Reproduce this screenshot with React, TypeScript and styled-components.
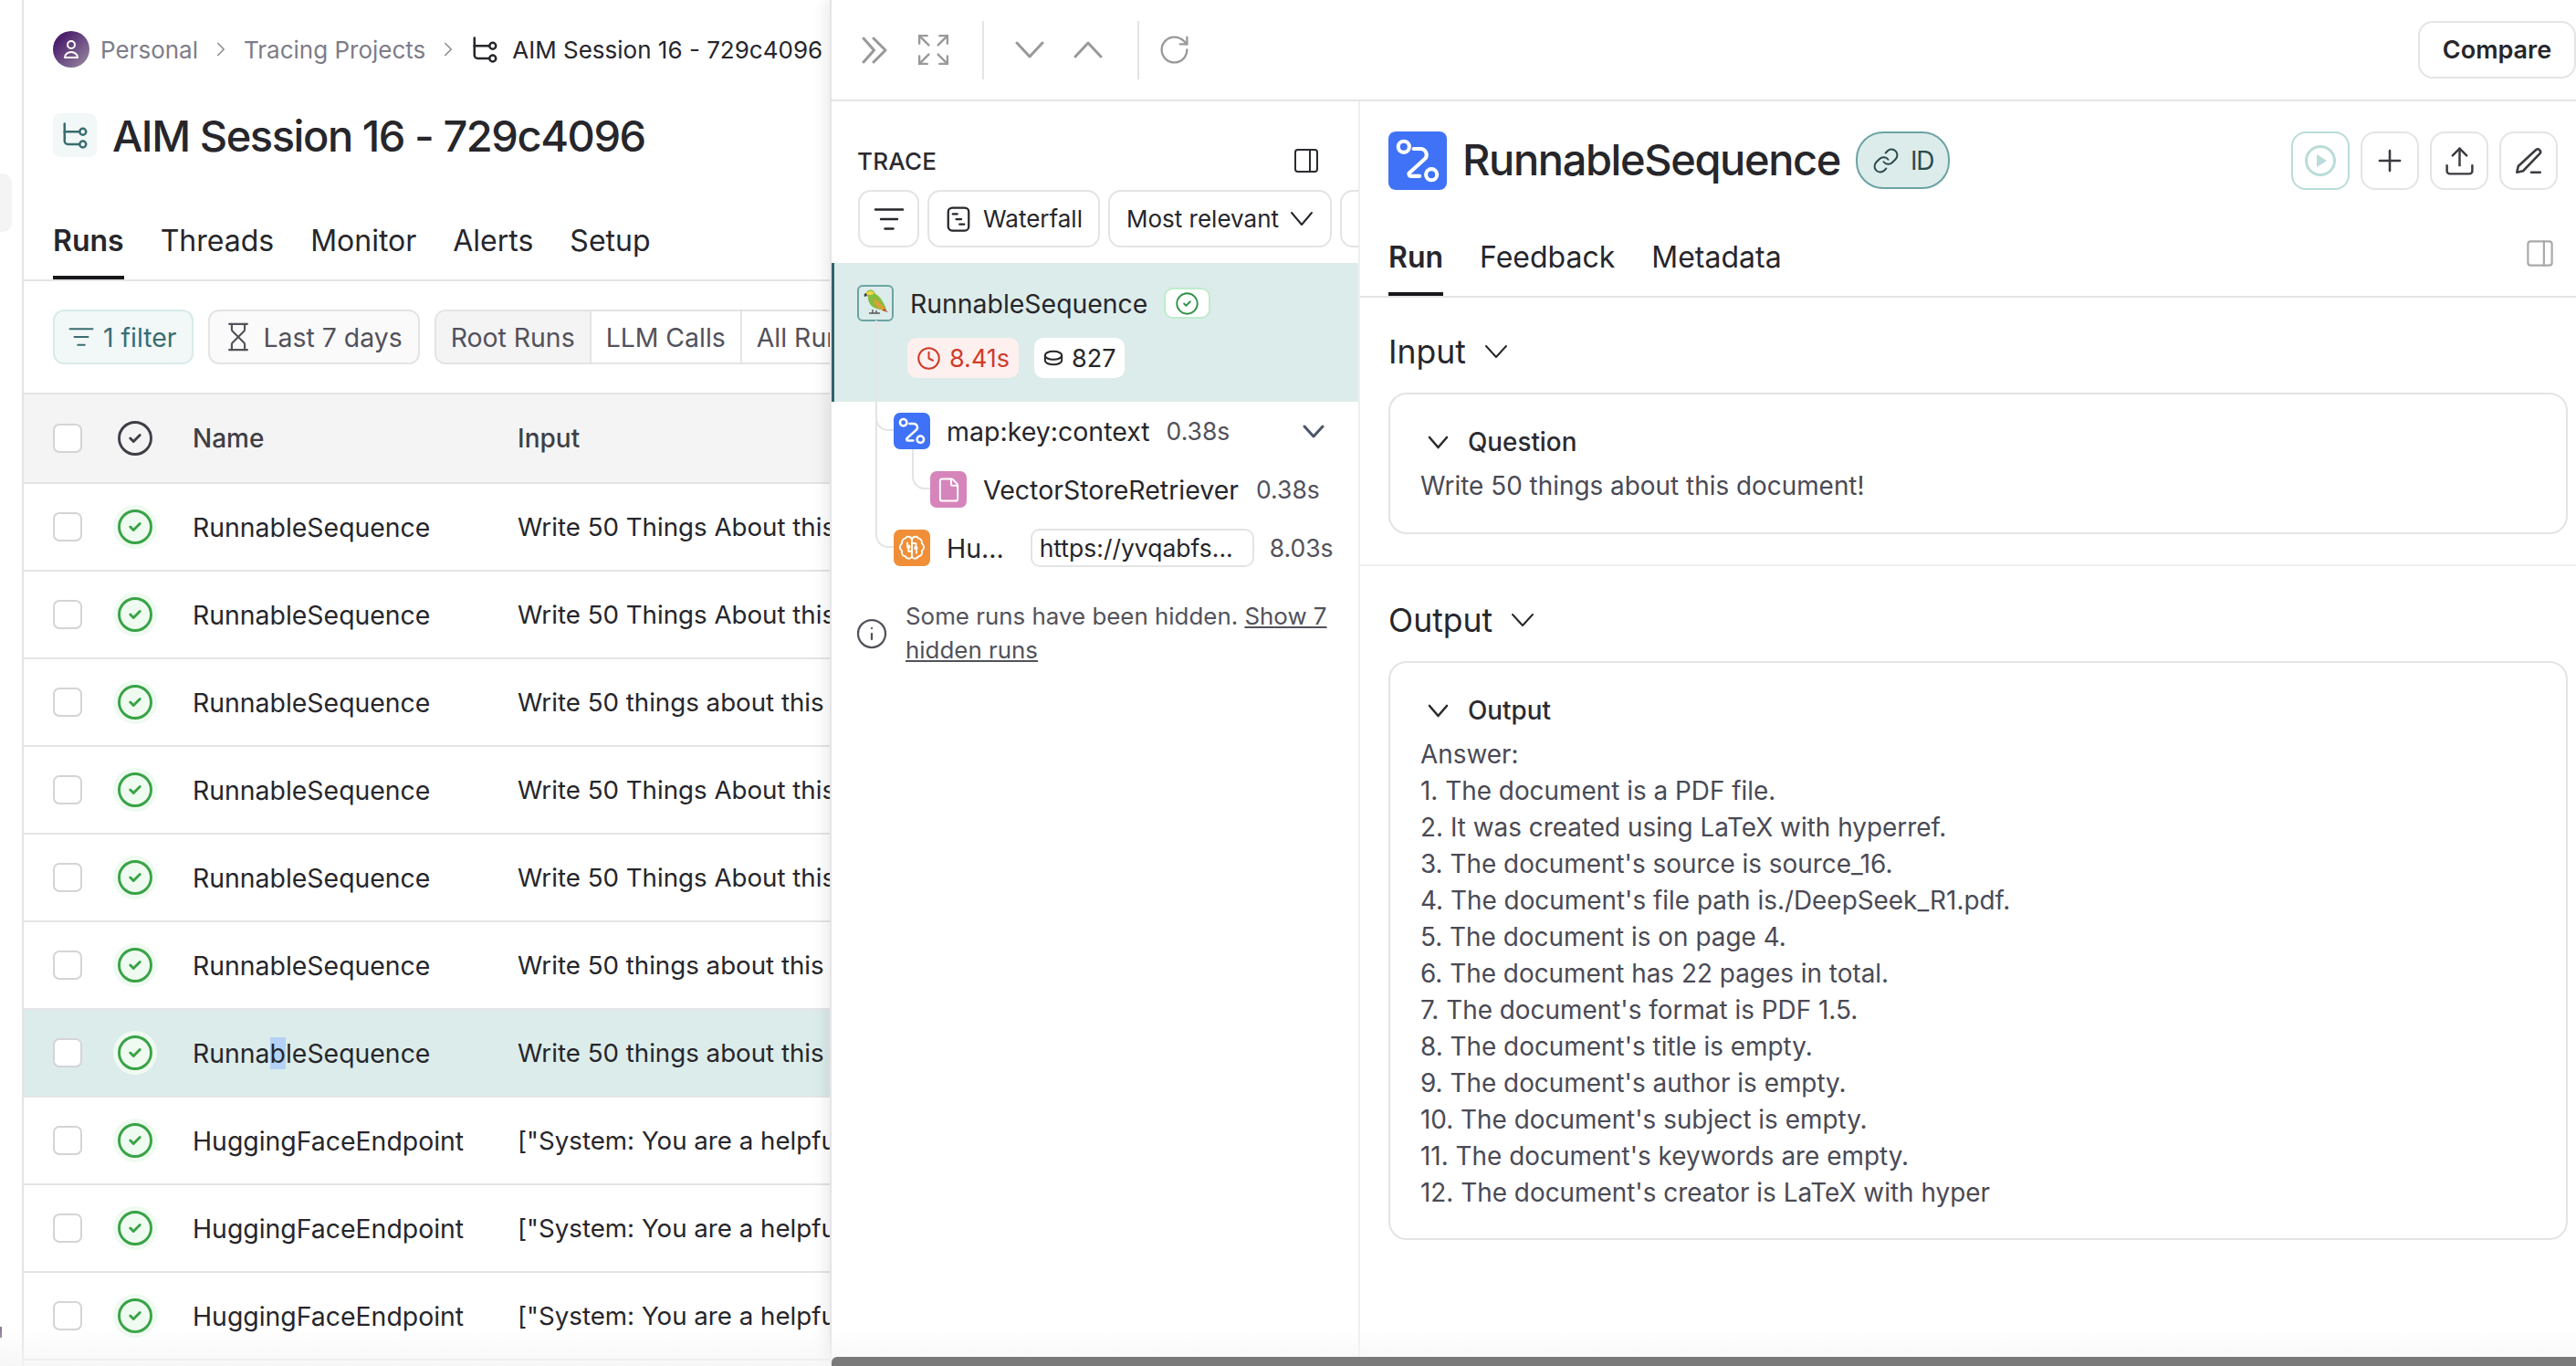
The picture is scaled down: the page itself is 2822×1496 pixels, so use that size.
import React from "react";
import styled, { createGlobalStyle } from "styled-components";
import {
  Expand, RotateCw, PanelRight, Hourglass, Info, Link, Plus, Upload, ChevronRight, File, Clock, CircleCheck, ListFilter,
} from "lucide-react";

const Global = createGlobalStyle`
  html, body { margin: 0; padding: 0; background: #fff; }
  body { font-family: Inter, "Liberation Sans", sans-serif; color: #26262b; overflow: hidden; }
  * { box-sizing: border-box; }
`;

const Page = styled.div`
  position: relative;
  display: flex;
  width: 2822px;
  height: 1496px;
  overflow: hidden;
  background: #fff;
`;

const Rail = styled.aside`
  position: relative;
  flex: 0 0 26px;
  border-right: 2px solid #e4e4e7;
`;
const RailNub = styled.div`
  position: absolute;
  left: -12px;
  top: 190px;
  width: 25px;
  height: 64px;
  border-radius: 10px;
  background: #f4f4f5;
`;
const RailFoot = styled.div`
  position: absolute;
  left: 0;
  top: 1453px;
  width: 2px;
  height: 12px;
  background: #8a7a98;
`;

const Main = styled.main`
  flex: 0 0 883px;
  min-width: 0;
  overflow: hidden;
  display: flex;
  flex-direction: column;
`;
const Crumbs = styled.nav`
  height: 108px;
  display: flex;
  align-items: center;
  padding-left: 32px;
  font-size: 26px;
  color: #7d7d88;
  white-space: nowrap;
`;
const Avatar = styled.span`
  width: 40px;
  height: 40px;
  border-radius: 50%;
  background: linear-gradient(135deg, #4c1f6d 20%, #9c8fa4 100%);
  display: inline-flex;
  align-items: center;
  justify-content: center;
  color: #fff;
  margin-right: 12px;
`;
const CrumbSep = styled.span`
  display: inline-flex;
  margin: 0 12px;
  color: #8d8d96;
`;
const CrumbCurrent = styled.span`
  display: inline-flex;
  align-items: center;
  gap: 15px;
  color: #26262b;
`;
const TitleRow = styled.div`
  height: 80px;
  display: flex;
  align-items: center;
  gap: 17px;
  padding-left: 32px;
  font-size: 47px;
  font-weight: 500;
  letter-spacing: -1.45px;
  white-space: nowrap;
`;
const TitleIcon = styled.span`
  width: 48px;
  height: 48px;
  border-radius: 8px;
  background: #f1f8f7;
  display: inline-flex;
  align-items: center;
  justify-content: center;
  color: #3a6d70;
`;
const Tabs = styled.div<{ $pad: number; $gap: number; $h: number; $size: number }>`
  height: ${(p) => p.$h}px;
  flex: none;
  display: flex;
  gap: ${(p) => p.$gap}px;
  padding-left: ${(p) => p.$pad}px;
  border-bottom: 2px solid #e4e4e7;
  font-size: ${(p) => p.$size}px;
  position: relative;
`;
const Tab = styled.div<{ $active?: boolean }>`
  display: flex;
  align-items: flex-end;
  height: 100%;
  line-height: 38px;
  padding-bottom: 19px;
  font-weight: ${(p) => (p.$active ? 600 : 400)};
  border-bottom: 4px solid ${(p) => (p.$active ? "#18181b" : "transparent")};
`;
const FilterBar = styled.div`
  height: 124px;
  flex: none;
  display: flex;
  align-items: center;
  padding: 0 0 0 32px;
  gap: 16px;
  font-size: 28.4px;
  border-bottom: 2px solid #e4e4e7;
  white-space: nowrap;
  color: #52525b;
`;
const Pill = styled.div<{ $tint?: boolean }>`
  height: 60px;
  display: flex;
  flex: none;
  align-items: center;
  gap: ${(p) => (p.$tint ? 9 : 10)}px;
  padding: 0 ${(p) => (p.$tint ? 17 : 17)}px 0 14px;
  border-radius: 12px;
  border: 2px solid ${(p) => (p.$tint ? "#d8ebe9" : "#e4e4e7")};
  background: ${(p) => (p.$tint ? "#f1f8f7" : "#fafafa")};
  color: ${(p) => (p.$tint ? "#3a6d70" : "#52525b")};
`;
const Segments = styled.div`
  height: 60px;
  display: flex;
  flex: none;
  border: 2px solid #e4e4e7;
  border-radius: 12px;
  overflow: hidden;
`;
const Segment = styled.div<{ $on?: boolean }>`
  display: flex;
  align-items: center;
  padding: 0 16px;
  background: ${(p) => (p.$on ? "#f4f4f5" : "#fff")};
  border-right: 2px solid #e4e4e7;
`;
const TableHead = styled.div`
  height: 98px;
  flex: none;
  display: flex;
  align-items: center;
  background: #f4f4f5;
  font-size: 28px;
  font-weight: 500;
  color: #3f3f46;
  border-bottom: 2px solid #e4e4e7;
  white-space: nowrap;
`;
const Row = styled.div<{ $on?: boolean }>`
  height: 96px;
  flex: none;
  display: flex;
  align-items: center;
  background: ${(p) => (p.$on ? "#dcecea" : "#fff")};
  color: #26262b;
  border-bottom: 2px solid #e4e4e7;
  white-space: nowrap;
`;
const CheckCell = styled.div`
  flex: 0 0 84px;
  padding-left: 32px;
`;
const Check = styled.span`
  display: block;
  width: 32px;
  height: 32px;
  background: #fff;
  border: 2px solid #d4d4d8;
  border-radius: 7px;
`;
const StatusCell = styled.div`
  flex: 0 0 101px;
  padding-left: 14px;
  display: flex;
`;
const Halo = styled.span<{ $plain?: boolean }>`
  width: 48px;
  height: 48px;
  border-radius: 50%;
  background: ${(p) => (p.$plain ? "transparent" : "#effaf0")};
  color: ${(p) => (p.$plain ? "#3f3f46" : "#38a346")};
  display: inline-flex;
  align-items: center;
  justify-content: center;
`;
const NameCell = styled.div`
  flex: 0 0 356px;
  font-size: 28.4px;
`;
const Sel = styled.span`
  background: #b3d2f5;
`;
const InputCell = styled.div`
  flex: 1;
  min-width: 0;
  overflow: hidden;
  font-size: 27.7px;
`;
const HeadName = styled(NameCell)`
  font-size: 28px;
`;
const HeadInput = styled(InputCell)`
  font-size: 28px;
`;

const Panel = styled.section`
  position: relative;
  flex: 1;
  min-width: 0;
  display: flex;
  flex-direction: column;
  background: #fff;
  box-shadow: -6px 0 14px rgba(0, 0, 0, 0.07);
  border-left: 2px solid #e4e4e7;
`;
const TopBar = styled.header`
  height: 111px;
  flex: none;
  display: flex;
  align-items: center;
  padding-left: 32px;
  border-bottom: 2px solid #e4e4e7;
  color: #999;
`;
const IconGroup = styled.div<{ $gap: number }>`
  display: flex;
  align-items: center;
  gap: ${(p) => p.$gap}px;
`;
const VDivider = styled.span<{ $ml: number; $mr: number }>`
  width: 2px;
  height: 64px;
  background: #e4e4e7;
  margin: 0 ${(p) => p.$mr}px 0 ${(p) => p.$ml}px;
`;
const CompareBtn = styled.button`
  margin-left: auto;
  width: 173px;
  height: 63px;
  border: 2px solid #e4e4e7;
  border-radius: 16px;
  background: #fff;
  font: 600 27px Inter, sans-serif;
  color: #26262b;
`;
const Split = styled.div`
  flex: 1;
  min-height: 0;
  display: flex;
`;
const TracePane = styled.div`
  flex: 0 0 579px;
  width: 579px;
  border-right: 2px solid #efeff1;
  overflow: hidden;
`;
const TraceHead = styled.div`
  height: 97px;
  display: flex;
  align-items: center;
  justify-content: space-between;
  padding: 41px 41px 8px 28px;
  font-size: 26px;
  font-weight: 500;
  letter-spacing: 0.2px;
  color: #2b2b30;
`;
const TraceTools = styled.div`
  display: flex;
  align-items: center;
  gap: 9px;
  padding-left: 29px;
  height: 63px;
  width: 578px;
  overflow: hidden;
  font-size: 26px;
  white-space: nowrap;
`;
const ToolBtn = styled.div<{ $w: number }>`
  flex: 0 0 ${(p) => p.$w}px;
  height: 63px;
  display: flex;
  align-items: center;
  justify-content: center;
  gap: 12px;
  border: 2px solid #e4e4e7;
  border-radius: 14px;
  background: #fff;
`;
const SelectedNode = styled.div`
  margin-top: 17px;
  height: 152px;
  width: 577px;
  background: #dcecea;
  border-left: 3px solid #2f6468;
  padding: 24px 0 0 25px;
`;
const NodeLine = styled.div`
  display: flex;
  align-items: center;
  font-size: 28.4px;
  white-space: nowrap;
`;
const ParrotBox = styled.span`
  width: 40px;
  height: 40px;
  border: 2px solid #6ba3a3;
  border-radius: 6px;
  margin-right: 18px;
  display: inline-flex;
  align-items: center;
  justify-content: center;
`;
const OkBadge = styled.span`
  margin-left: 18px;
  width: 51px;
  height: 34px;
  background: #fff;
  border: 2px solid #bfeccb;
  border-radius: 10px;
  display: inline-flex;
  align-items: center;
  justify-content: center;
  color: #2e9148;
`;
const ChipRow = styled.div`
  display: flex;
  gap: 17px;
  margin: 18px 0 0 55px;
`;
const Chip = styled.span<{ $warn?: boolean }>`
  height: 44px;
  display: inline-flex;
  align-items: center;
  gap: 9px;
  padding: 0 10px;
  border-radius: 10px;
  font-size: 27px;
  background: ${(p) => (p.$warn ? "#fdf0ee" : "#fff")};
  color: ${(p) => (p.$warn ? "#d13b2a" : "#26262b")};
`;
const Tree = styled.div`
  position: relative;
`;
const TreeLine = styled.span<{ $l: number; $t: number; $h: number }>`
  position: absolute;
  left: ${(p) => p.$l}px;
  top: ${(p) => p.$t}px;
  width: 22px;
  height: ${(p) => p.$h}px;
  border-left: 2px solid #e4e4e7;
  border-bottom: 2px solid #e4e4e7;
  border-bottom-left-radius: 14px;
`;
const TreeRow = styled.div<{ $indent: number }>`
  position: relative;
  height: 64px;
  display: flex;
  align-items: center;
  padding-left: ${(p) => p.$indent}px;
  font-size: 28.5px;
  white-space: nowrap;
`;
const NodeIcon = styled.span<{ $bg: string }>`
  flex: none;
  width: 40px;
  height: 40px;
  border-radius: 7px;
  background: ${(p) => p.$bg};
  color: #fff;
  display: inline-flex;
  align-items: center;
  justify-content: center;
  margin-right: 18px;
`;
const Dur = styled.span<{ $ml: number }>`
  margin-left: ${(p) => p.$ml}px;
  color: #52525b;
  font-size: 26.5px;
`;
const RowChevron = styled.span`
  margin-left: auto;
  margin-right: 37px;
  color: #4a5568;
  display: inline-flex;
`;
const UrlBox = styled.span`
  width: 245px;
  height: 42px;
  margin-left: 29px;
  border: 2px solid #e4e4e7;
  border-radius: 10px;
  padding-left: 8px;
  display: inline-flex;
  align-items: center;
  font-size: 26.5px;
`;
const Hidden = styled.div`
  display: flex;
  gap: 19px;
  align-items: center;
  margin: 25px 0 0 26px;
  font-size: 25.9px;
  line-height: 36.5px;
  color: #52525b;
  svg { flex: none; }
`;
const Under = styled.span`
  text-decoration: underline;
`;
const DetailPane = styled.div`
  flex: 1;
  min-width: 0;
  display: flex;
  flex-direction: column;
`;
const DetailHead = styled.div`
  height: 130px;
  flex: none;
  padding: 33px 20px 0 31px;
  display: flex;
  align-items: flex-start;
`;
const BigIcon = styled.span`
  width: 64px;
  height: 64px;
  border-radius: 8px;
  background: #3f72f6;
  color: #fff;
  display: inline-flex;
  align-items: center;
  justify-content: center;
  margin-right: 17px;
`;
const DetailTitle = styled.h1`
  margin: 0;
  height: 64px;
  line-height: 62px;
  font-size: 47px;
  font-weight: 500;
  letter-spacing: -1.4px;
`;
const IdPill = styled.span`
  margin-left: 17px;
  width: 103px;
  height: 63px;
  background: #dcecea;
  border: 2px solid #6ba3a3;
  border-radius: 30px;
  display: inline-flex;
  align-items: center;
  justify-content: center;
  gap: 12px;
  font-size: 28px;
  letter-spacing: -1.5px;
  color: #2b4a4c;
`;
const HeadActions = styled.div`
  margin-left: auto;
  display: flex;
  gap: 12px;
`;
const ActionBtn = styled.span<{ $teal?: boolean }>`
  width: 64px;
  height: 64px;
  border-radius: 16px;
  border: 2px solid ${(p) => (p.$teal ? "#b9dcd9" : "#e4e4e7")};
  color: ${(p) => (p.$teal ? "#b9dcd9" : "#3a3a40")};
  display: inline-flex;
  align-items: center;
  justify-content: center;
`;
const TabsEnd = styled.span`
  position: absolute;
  right: 22px;
  top: 19px;
  color: #aaa;
  display: inline-flex;
`;
const SectionHead = styled.div<{ $top: number }>`
  margin: ${(p) => p.$top}px 0 0 31px;
  height: 48px;
  display: flex;
  align-items: center;
  gap: 20px;
  font-size: 35.5px;
  font-weight: 400;
`;
const Card = styled.div<{ $h: number }>`
  margin: 21px 9px 0 31px;
  height: ${(p) => p.$h}px;
  border: 2px solid #e4e4e7;
  border-radius: 20px;
  padding: 29px 33px 0;
`;
const CardHead = styled.div`
  height: 46px;
  display: flex;
  align-items: center;
  gap: 21px;
  padding-left: 8px;
  font-size: 27.8px;
  font-weight: 500;
  color: #2b2b30;
`;
const Body = styled.div`
  margin-top: 5px;
  font-size: 27.9px;
  line-height: 40px;
  color: #4a4a55;
  white-space: pre-line;
`;
const HRule = styled.div`
  margin-top: 33px;
  height: 2px;
  background: #efeff1;
`;
const ScrollTrack = styled.div`
  position: absolute;
  left: 911px;
  right: 0;
  bottom: 0;
  height: 10px;
  border-radius: 6px 0 0 0;
  background: #7a7a7a;
`;
const BottomFade = styled.div`
  position: absolute;
  left: 0;
  right: 0;
  bottom: 0;
  height: 40px;
  background: linear-gradient(to bottom, rgba(245,245,245,0), rgba(245,245,245,0.8));
  pointer-events: none;
`;

const Caret = ({ w, h, sw = 2.5, up }: { w: number; h: number; sw?: number; up?: boolean }) => (
  <svg width={w + 4} height={h + 4} viewBox={`0 0 ${w + 4} ${h + 4}`} fill="none" stroke="currentColor" strokeWidth={sw} strokeLinecap="round" strokeLinejoin="round">
    <path d={up ? `M2 ${h + 2}L${w / 2 + 2} 2L${w + 2} ${h + 2}` : `M2 2L${w / 2 + 2} ${h + 2}L${w + 2} 2`} />
  </svg>
);
const DoubleChevron = () => (
  <svg width="30" height="30" viewBox="0 0 30 30" fill="none" stroke="currentColor" strokeWidth="3" strokeLinecap="round" strokeLinejoin="round">
    <path d="M3 2l11.5 13L3 28" />
    <path d="M14 2l13 13-13 13" />
  </svg>
);
const RouteIcon = ({ size = 28 }: { size?: number }) => (
  <svg width={size} height={size} viewBox="0 0 24 24" fill="none" stroke="currentColor" strokeWidth="1.9" strokeLinecap="round" strokeLinejoin="round">
    <circle cx="5" cy="5" r="2.8" />
    <circle cx="19" cy="19" r="2.8" />
    <path d="M10 6h3.5a3 3 0 0 1 2.4 4.8L8 18a1 1 0 0 0 .6 1.8H13" />
  </svg>
);
const ProjectIcon = ({ size = 30 }: { size?: number }) => (
  <svg width={size} height={size} viewBox="0 0 24 24" fill="none" stroke="currentColor" strokeWidth="2" strokeLinecap="round" strokeLinejoin="round">
    <path d="M3 2v15a3 3 0 0 0 3 3h10" />
    <path d="M3 9h13" />
    <circle cx="19" cy="9" r="2.8" />
    <circle cx="19" cy="20" r="2.8" />
  </svg>
);
const UserIcon = () => (
  <svg width="24" height="24" viewBox="0 0 24 24" fill="none" stroke="currentColor" strokeWidth="2" strokeLinecap="round" strokeLinejoin="round">
    <circle cx="12" cy="7" r="4" />
    <path d="M5 21a7 6 0 0 1 14 0z" />
  </svg>
);
const BrainIcon = () => (
  <svg width="30" height="30" viewBox="0 0 24 24" fill="none" stroke="currentColor" strokeWidth="1.5" strokeLinecap="round" strokeLinejoin="round">
    <path d="M12 4.5a3.2 3.2 0 0 0-5.8-.8A3.4 3.4 0 0 0 3.4 8a3.8 3.8 0 0 0 0 6.6 3.4 3.4 0 0 0 2.8 4.8 3.4 3.4 0 0 0 5.8.6z" />
    <path d="M12 4.5a3.2 3.2 0 0 1 5.8-.8A3.4 3.4 0 0 1 20.6 8a3.8 3.8 0 0 1 0 6.6 3.4 3.4 0 0 1-2.8 4.8 3.4 3.4 0 0 1-5.8.6z" />
    <path d="M12 8h3.5v3M12 15h-3v-3M8 7.5v2M16 14.5v2" />
    <circle cx="15.5" cy="12.2" r="1" />
    <circle cx="9" cy="11" r="1" />
  </svg>
);
const WaterfallIcon = () => (
  <svg width="30" height="30" viewBox="0 0 24 24" fill="none" stroke="currentColor" strokeWidth="1.8" strokeLinecap="round">
    <rect x="3" y="2" width="18" height="20" rx="3.5" />
    <path d="M7 7.5h4M10 12h4.5M13 16.5h4" />
  </svg>
);
const CoinIcon = () => (
  <svg width="22" height="20" viewBox="0 0 24 20" fill="none" stroke="currentColor" strokeWidth="2.2">
    <ellipse cx="12" cy="7" rx="10" ry="5" />
    <path d="M2 7v6c0 2.8 4.5 5 10 5s10-2.2 10-5V7" />
  </svg>
);
const PenLineIcon = () => (
  <svg width="36" height="36" viewBox="0 0 24 24" fill="none" stroke="currentColor" strokeWidth="1.7" strokeLinecap="round" strokeLinejoin="round">
    <path d="M14 20.5h6.5" />
    <path d="M17.5 4a2 2 0 0 1 2.8 2.8L8 19.5l-4.5 1 1-4.5z" />
  </svg>
);
const PlayCircle = () => (
  <svg width="36" height="36" viewBox="0 0 36 36" fill="none">
    <circle cx="18" cy="18" r="15.5" stroke="currentColor" strokeWidth="3" />
    <path d="M14 11l11 7-11 7z" fill="currentColor" />
  </svg>
);
const Parrot = () => (
  <svg width="34" height="34" viewBox="0 0 32 34">
    <path d="M6 5c3-4 9-3 10 2 6 3 10 11 12 17l-3 1-8-2c-6-2-9-7-9-12z" fill="#86bd3c" />
    <path d="M15 12c5 3 9 7 12 12l-5 0c-5-2-8-6-7-12z" fill="#d9a03a" />
    <path d="M26 23l4 4-7-2z" fill="#c8442f" />
    <path d="M6 6c2-3 7-3 9 0-2 2-6 3-9 1z" fill="#f0d34a" />
    <path d="M6 6c-2 0-3 2-2 4l3-1z" fill="#3f3f3f" />
    <path d="M9 28h12M13 24v4M17 25v3" stroke="#555" strokeWidth="1.4" />
  </svg>
);

const rows: { name: string; input: string; on?: boolean; sel?: boolean }[] = [
  { name: "RunnableSequence", input: "Write 50 Things About this document!" },
  { name: "RunnableSequence", input: "Write 50 Things About this document!" },
  { name: "RunnableSequence", input: "Write 50 things about this document!" },
  { name: "RunnableSequence", input: "Write 50 Things About this document!" },
  { name: "RunnableSequence", input: "Write 50 Things About this document!" },
  { name: "RunnableSequence", input: "Write 50 things about this document!" },
  { name: "RunnableSequence", input: "Write 50 things about this document!", on: true, sel: true },
  { name: "HuggingFaceEndpoint", input: '["System: You are a helpful assistant."]' },
  { name: "HuggingFaceEndpoint", input: '["System: You are a helpful assistant."]' },
  { name: "HuggingFaceEndpoint", input: '["System: You are a helpful assistant."]' },
];

const outputText = `Answer:
1. The document is a PDF file.
2. It was created using LaTeX with hyperref.
3. The document's source is source_16.
4. The document's file path is./DeepSeek_R1.pdf.
5. The document is on page 4.
6. The document has 22 pages in total.
7. The document's format is PDF 1.5.
8. The document's title is empty.
9. The document's author is empty.
10. The document's subject is empty.
11. The document's keywords are empty.
12. The document's creator is LaTeX with hyper`;

export default function App() {
  return (
    <Page>
      <Global />
      <Rail><RailNub /><RailFoot /></Rail>
      <Main>
        <Crumbs>
          <Avatar><UserIcon /></Avatar>
          Personal
          <CrumbSep><ChevronRight size={26} strokeWidth={1.5} /></CrumbSep>
          Tracing Projects
          <CrumbSep><ChevronRight size={26} strokeWidth={1.5} /></CrumbSep>
          <CrumbCurrent><ProjectIcon />AIM Session 16 - 729c4096</CrumbCurrent>
        </Crumbs>
        <TitleRow>
          <TitleIcon><ProjectIcon /></TitleIcon>
          AIM Session 16 - 729c4096
        </TitleRow>
        <Tabs $pad={32} $gap={40} $h={120} $size={32}>
          <Tab $active>Runs</Tab>
          <Tab>Threads</Tab>
          <Tab>Monitor</Tab>
          <Tab>Alerts</Tab>
          <Tab>Setup</Tab>
        </Tabs>
        <FilterBar>
          <Pill $tint><ListFilter size={30} strokeWidth={1.6} />1 filter</Pill>
          <Pill><Hourglass size={34} strokeWidth={1.5} />Last 7 days</Pill>
          <Segments>
            <Segment $on>Root Runs</Segment>
            <Segment>LLM Calls</Segment>
            <Segment>All Runs</Segment>
          </Segments>
        </FilterBar>
        <TableHead>
          <CheckCell><Check /></CheckCell>
          <StatusCell><Halo $plain><CircleCheck size={42} strokeWidth={1.65} /></Halo></StatusCell>
          <HeadName>Name</HeadName>
          <HeadInput>Input</HeadInput>
        </TableHead>
        {rows.map((r, i) => (
          <Row key={i} $on={r.on}>
            <CheckCell><Check /></CheckCell>
            <StatusCell><Halo><CircleCheck size={42} strokeWidth={1.65} /></Halo></StatusCell>
            <NameCell>
              {r.sel ? (<>Runna<Sel>b</Sel>leSequence</>) : r.name}
            </NameCell>
            <InputCell>{r.input}</InputCell>
          </Row>
        ))}
      </Main>
      <Panel>
        <TopBar>
          <IconGroup $gap={29}>
            <DoubleChevron />
            <Expand size={41} strokeWidth={1.4} />
          </IconGroup>
          <VDivider $ml={33} $mr={34} />
          <IconGroup $gap={32}>
            <Caret w={28} h={15} sw={3} />
            <Caret w={28} h={15} sw={3} up />
          </IconGroup>
          <VDivider $ml={38} $mr={20} />
          <RotateCw size={37} strokeWidth={1.5} />
          <CompareBtn>Compare</CompareBtn>
        </TopBar>
        <Split>
          <TracePane>
            <TraceHead>TRACE<PanelRight size={32} strokeWidth={1.5} color="#2b2b30" /></TraceHead>
            <TraceTools>
              <ToolBtn $w={67}><ListFilter size={36} strokeWidth={1.6} /></ToolBtn>
              <ToolBtn $w={189}><WaterfallIcon />Waterfall</ToolBtn>
              <ToolBtn $w={245}>Most relevant<Caret w={22} h={13} sw={2} /></ToolBtn>
              <ToolBtn $w={60} />
            </TraceTools>
            <SelectedNode>
              <NodeLine>
                <ParrotBox><Parrot /></ParrotBox>
                RunnableSequence
                <OkBadge><CircleCheck size={27} strokeWidth={1.6} /></OkBadge>
              </NodeLine>
              <ChipRow>
                <Chip $warn><Clock size={27} strokeWidth={1.8} />8.41s</Chip>
                <Chip><CoinIcon />827</Chip>
              </ChipRow>
            </SelectedNode>
            <Tree>
              <TreeLine $l={48} $t={-89} $h={121} />
              <TreeLine $l={48} $t={-89} $h={249} />
              <TreeLine $l={88} $t={52} $h={44} />
              <TreeRow $indent={68}>
                <NodeIcon $bg="#3f72f6"><RouteIcon size={32} /></NodeIcon>
                map:key:context
                <Dur $ml={18}>0.38s</Dur>
                <RowChevron><Caret w={20} h={11} sw={3} /></RowChevron>
              </TreeRow>
              <TreeRow $indent={108}>
                <NodeIcon $bg="#d685bb"><File size={29} strokeWidth={1.6} /></NodeIcon>
                VectorStoreRetriever
                <Dur $ml={19}>0.38s</Dur>
              </TreeRow>
              <TreeRow $indent={68}>
                <NodeIcon $bg="#f08f37"><BrainIcon /></NodeIcon>
                Hu...
                <UrlBox>https://yvqabfs...</UrlBox>
                <Dur $ml={17}>8.03s</Dur>
              </TreeRow>
            </Tree>
            <Hidden>
              <Info size={36} strokeWidth={1.5} />
              <span>Some runs have been hidden. <Under>Show 7 hidden runs</Under></span>
            </Hidden>
          </TracePane>
          <DetailPane>
            <DetailHead>
              <BigIcon><RouteIcon size={52} /></BigIcon>
              <DetailTitle>RunnableSequence</DetailTitle>
              <IdPill><Link size={30} strokeWidth={1.6} />ID</IdPill>
              <HeadActions>
                <ActionBtn $teal><PlayCircle /></ActionBtn>
                <ActionBtn><Plus size={38} strokeWidth={1.6} /></ActionBtn>
                <ActionBtn><Upload size={37} strokeWidth={1.6} /></ActionBtn>
                <ActionBtn><PenLineIcon /></ActionBtn>
              </HeadActions>
            </DetailHead>
            <Tabs $pad={31} $gap={40} $h={85} $size={32}>
              <Tab $active>Run</Tab>
              <Tab>Feedback</Tab>
              <Tab>Metadata</Tab>
              <TabsEnd><PanelRight size={35} strokeWidth={1.5} /></TabsEnd>
            </Tabs>
            <SectionHead $top={35}>Input<Caret w={22} h={12} sw={2} /></SectionHead>
            <Card $h={155}>
              <CardHead><Caret w={19} h={11} sw={2.6} />Question</CardHead>
              <Body>Write 50 things about this document!</Body>
            </Card>
            <HRule />
            <SectionHead $top={35}>Output<Caret w={22} h={12} sw={2} /></SectionHead>
            <Card $h={634}>
              <CardHead><Caret w={19} h={11} sw={2.6} />Output</CardHead>
              <Body>{outputText}</Body>
            </Card>
          </DetailPane>
        </Split>
      </Panel>
      <BottomFade />
      <ScrollTrack />
    </Page>
  );
}
